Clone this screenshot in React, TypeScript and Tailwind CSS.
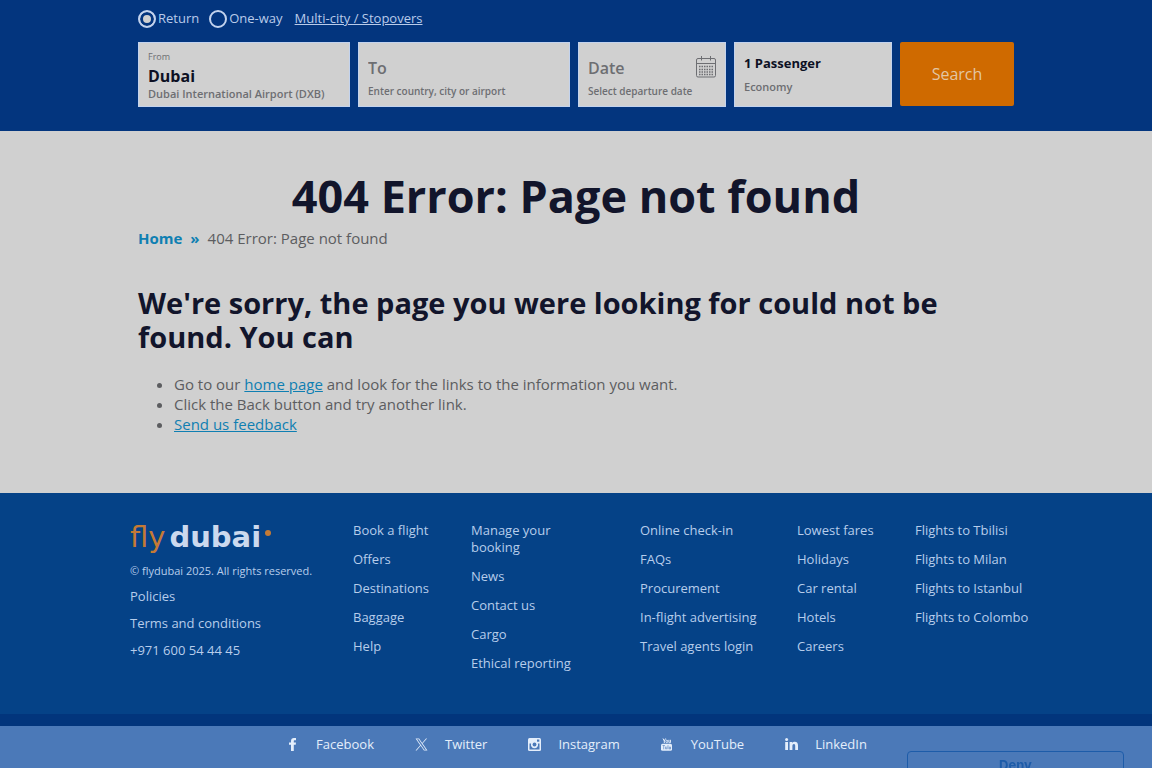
import React from 'react';

interface FooterLinkProps {
  label: string;
}

const linkColumns: string[][] = [
  ['Book a flight', 'Offers', 'Destinations', 'Baggage', 'Help'],
  ['Manage your booking', 'News', 'Contact us', 'Cargo', 'Ethical reporting'],
  ['Online check-in', 'FAQs', 'Procurement', 'In-flight advertising', 'Travel agents login'],
  ['Lowest fares', 'Holidays', 'Car rental', 'Hotels', 'Careers'],
  ['Flights to Tbilisi', 'Flights to Milan', 'Flights to Istanbul', 'Flights to Colombo'],
];

const CalendarIcon: React.FC = () => (
  <svg className="w-5 h-[22px] shrink-0" viewBox="0 0 20 22" fill="none" stroke="#6d6e72" aria-hidden="true">
    <rect x="0.5" y="2.5" width="19" height="18.5" rx="1.5" />
    <path d="M0.5 7.5h19M5.5 0v4.500M14.500 0v4.500" />
    <path d="M3 10.500h14M3 13.500h14M3 16h14M3 18.500h14" strokeWidth="1.300" strokeDasharray="1.500 1" />
  </svg>
);

const FacebookIcon: React.FC = () => (
  <svg className="w-[7px] h-[13px]" viewBox="0 0 7 13" fill="currentColor" aria-hidden="true">
    <path d="M7 0.100v2.200H5.700c-0.700 0-0.900 0.300-0.900 0.900v1.300H7l-0.300 2.300H4.800V13H2V6.800H0V4.500h2V2.900C2 1.100 3.100 0 4.900 0z" />
  </svg>
);

const XIcon: React.FC = () => (
  <svg className="w-[13px] h-[13px]" viewBox="0 0 24 24" fill="currentColor" aria-hidden="true">
    <path d="M14.100 10.300 22.300 1h-2l-7.100 8.100L7.600 1H1l8.600 12.200L1 23h2l7.500-8.600 6 8.600H23zM3.700 2.500h3l13.600 19.100h-3z" />
  </svg>
);

const InstagramIcon: React.FC = () => (
  <svg className="w-[13px] h-[13px]" viewBox="0 0 13 13" aria-hidden="true">
    <rect width="13" height="13" rx="1.500" fill="currentColor" />
    <path d="M1.500 5.500h1.600a3.600 3.600 0 1 0 6.800 0h1.600v6h-10z" fill="#4b79b8" />
    <circle cx="6.500" cy="6.500" r="2.900" fill="currentColor" />
    <circle cx="6.500" cy="6.500" r="1.900" fill="#4b79b8" />
    <rect x="9" y="1.500" width="2.300" height="2.200" fill="#4b79b8" />
  </svg>
);

const YouTubeIcon: React.FC = () => (
  <svg className="w-[11px] h-[13px]" viewBox="0 0 11 13" aria-hidden="true">
    <path d="M2 0.500 3.300 3v2M4.600 0.500 3.300 3" stroke="currentColor" fill="none" />
    <ellipse cx="5.800" cy="3.400" rx="0.900" ry="1.300" stroke="currentColor" fill="none" />
    <path d="M7.900 1.800v2.700q0.800 0.500 1.500-0.500M9.400 1.800v3" stroke="currentColor" fill="none" />
    <rect y="5.800" width="11" height="7" rx="1.500" fill="currentColor" />
    <path d="M1.500 7.500h2.400M2.700 7.500v3.800M4.500 8.600v2.200h1.300V8.600M7 7.200v4M8.300 9h1.200v2H8.300z" stroke="#4b79b8" strokeWidth="0.6" fill="none" />
  </svg>
);

const LinkedInIcon: React.FC = () => (
  <svg className="w-[13px] h-3" viewBox="0 0 13 12" fill="currentColor" aria-hidden="true">
    <circle cx="1.600" cy="1.500" r="1.500" />
    <path d="M0.200 4h2.800v8H0.200zM4.600 4h2.700v1.100C7.800 4.300 8.700 3.800 9.800 3.800c2.300 0 3.200 1.400 3.200 3.700V12h-2.800V8c0-1.100-0.300-1.900-1.300-1.900S7.400 6.900 7.400 8v4H4.600z" />
  </svg>
);

const socials = [
  { name: 'Facebook', icon: <FacebookIcon /> },
  { name: 'Twitter', icon: <XIcon /> },
  { name: 'Instagram', icon: <InstagramIcon /> },
  { name: 'YouTube', icon: <YouTubeIcon /> },
  { name: 'LinkedIn', icon: <LinkedInIcon /> },
];

const FooterLink: React.FC<FooterLinkProps> = ({ label }) => (
  <li>
    <a href="#" className="block">{label}</a>
  </li>
);

const radioClass =
  'appearance-none w-[18px] h-[18px] rounded-full border-2 border-[#c3d3ee] checked:bg-[#d0d0d0] checked:shadow-[inset_0_0_0_3px_#03357e]';

const SearchBar: React.FC = () => (
  <header className="bg-[#03357e] px-4 pt-[10px] pb-6">
    <form className="max-w-[876px] mx-auto" onSubmit={(e) => e.preventDefault()}>
      <div className="flex items-center h-[18px] mb-[14px] text-[13px] text-[#b9cbea]">
        <label className="flex items-center gap-0.5 mr-[10px]">
          <input type="radio" name="trip" defaultChecked className={radioClass} />
          Return
        </label>
        <label className="flex items-center gap-0.5 mr-3">
          <input type="radio" name="trip" className={radioClass} />
          One-way
        </label>
        <a href="#" className="underline">Multi-city / Stopovers</a>
      </div>
      <div className="grid grid-cols-[212fr_212fr_148fr_158fr_114fr] gap-2 text-[#6d6e72]">
        <div className="bg-[#d0d0d0] h-[65px] px-[9px] pt-[7px] border border-[#c3d3ee]">
          <label htmlFor="from" className="block text-[9px] leading-[14px]">From</label>
          <input id="from" type="text" defaultValue="Dubai" className="block w-full h-6 text-base font-bold text-[#0d1024] outline-none" />
          <p className="text-[11px] leading-3 font-semibold whitespace-nowrap">Dubai International Airport (DXB)</p>
        </div>
        <div className="bg-[#d0d0d0] h-[65px] px-[9px] pt-[13px] border border-[#c3d3ee]">
          <input type="text" aria-label="To" placeholder="To" className="block w-full h-6 text-base font-semibold placeholder:text-[#6d6e72] outline-none" />
          <p className="text-[10px] leading-[22px] font-semibold whitespace-nowrap">Enter country, city or airport</p>
        </div>
        <div className="bg-[#d0d0d0] h-[65px] px-[9px] pt-[13px] border border-[#c3d3ee]">
          <div className="flex items-start">
            <input type="text" aria-label="Date" placeholder="Date" className="block w-full min-w-0 h-6 text-base font-semibold placeholder:text-[#6d6e72] outline-none" />
            <CalendarIcon />
          </div>
          <p className="text-[10px] leading-[22px] font-semibold whitespace-nowrap">Select departure date</p>
        </div>
        <button type="button" className="bg-[#d0d0d0] h-[65px] px-[9px] border border-[#c3d3ee] text-left">
          <span className="block text-[13px] leading-[23px] font-bold text-[#0d1024]">1 Passenger</span>
          <span className="block text-[11px] leading-[23px] font-semibold">Economy</span>
        </button>
        <button type="submit" className="bg-[#cf6a00] h-16 rounded-xs text-base text-[#e3c6a4]">Search</button>
      </div>
    </form>
  </header>
);

const ErrorContent: React.FC = () => (
  <main className="bg-[#d0d0d0] px-4 pt-9 pb-[59px]">
    <div className="max-w-[876px] mx-auto text-[#5c5d60]">
      <h1 className="mb-px text-[45px] leading-[58px] font-bold text-center text-[#12152b]">404 Error: Page not found</h1>
      <nav className="flex text-[15px] leading-6" aria-label="Breadcrumb">
        <a href="#" className="font-bold text-[#0f7fb2] mr-2">Home</a>
        <span className="font-bold text-[#0f7fb2] mr-2">»</span>
        <span>404 Error: Page not found</span>
      </nav>
      <h2 className="mt-9 text-[29px] leading-[34px] font-bold text-[#12152b]">
        We're sorry, the page you were looking for could not be found. You can
      </h2>
      <ul className="mt-5 pl-9 list-disc text-[15px] leading-5">
        <li>Go to our <a href="#" className="text-[#0f7fb2] underline">home page</a> and look for the links to the information you want.</li>
        <li>Click the Back button and try another link.</li>
        <li><a href="#" className="text-[#0f7fb2] underline">Send us feedback</a></li>
      </ul>
    </div>
  </main>
);

const Footer: React.FC = () => (
  <footer className="bg-[#054287] border-b-12 border-[#02357c] px-4 pt-[29px] pb-[42px] text-[#b7cdeb]">
    <div className="max-w-[892px] mx-auto grid grid-cols-[223fr_118fr_169fr_157fr_118fr_minmax(0,107fr)]">
      <div>
        <a href="#" aria-label="flydubai" className="flex h-8 text-[29px] leading-[30px] font-['DejaVu_Sans',sans-serif]">
          <span className="text-[#c47a35] mr-1">fly</span>
          <span className="font-bold text-[#ccd9ee]">dubai</span>
          <span className="w-[6px] h-[6px] rounded-full bg-[#c47a35] mt-2 ml-1" />
        </a>
        <p className="mt-2 text-[11px] leading-[18px]">© flydubai 2025. All rights reserved.</p>
        <ul className="mt-[3px] text-[13px] leading-[27px]">
          <FooterLink label="Policies" />
          <FooterLink label="Terms and conditions" />
          <FooterLink label="+971 600 54 44 45" />
        </ul>
      </div>
      {linkColumns.map((links, i) => (
        <ul key={links[0]} className={`flex flex-col gap-3 text-[13px] leading-[17px] ${i === 1 ? 'pr-14' : 'whitespace-nowrap'}`}>
          {links.map((label) => <FooterLink key={label} label={label} />)}
        </ul>
      ))}
    </div>
  </footer>
);

const App: React.FC = () => {
  return (
    <div className="min-h-screen flex flex-col bg-[#4b79b8] font-['Open_Sans',sans-serif]">
      <SearchBar />
      <ErrorContent />
      <Footer />
      <nav className="flex justify-center gap-10 pt-2 text-[13px] leading-5 text-[#e4eefb]" aria-label="Social media">
        {socials.map((s) => (
          <a key={s.name} href="#" className="flex items-center gap-[17px]">
            <span className="w-[14px] flex justify-center">{s.icon}</span>
            {s.name}
          </a>
        ))}
      </nav>
      {/* Consent banner peeking in from the bottom edge */}
      <div className="fixed bottom-0 right-7 w-[217px] h-[17px] overflow-hidden">
        <button type="button" className="w-full h-10 pb-3 border border-[#1d5ca9] rounded-sm text-[13px] leading-[27px] font-bold text-[#1d5ca9] font-['Inter',sans-serif]">Deny</button>
      </div>
    </div>
  );
};

export default App;
